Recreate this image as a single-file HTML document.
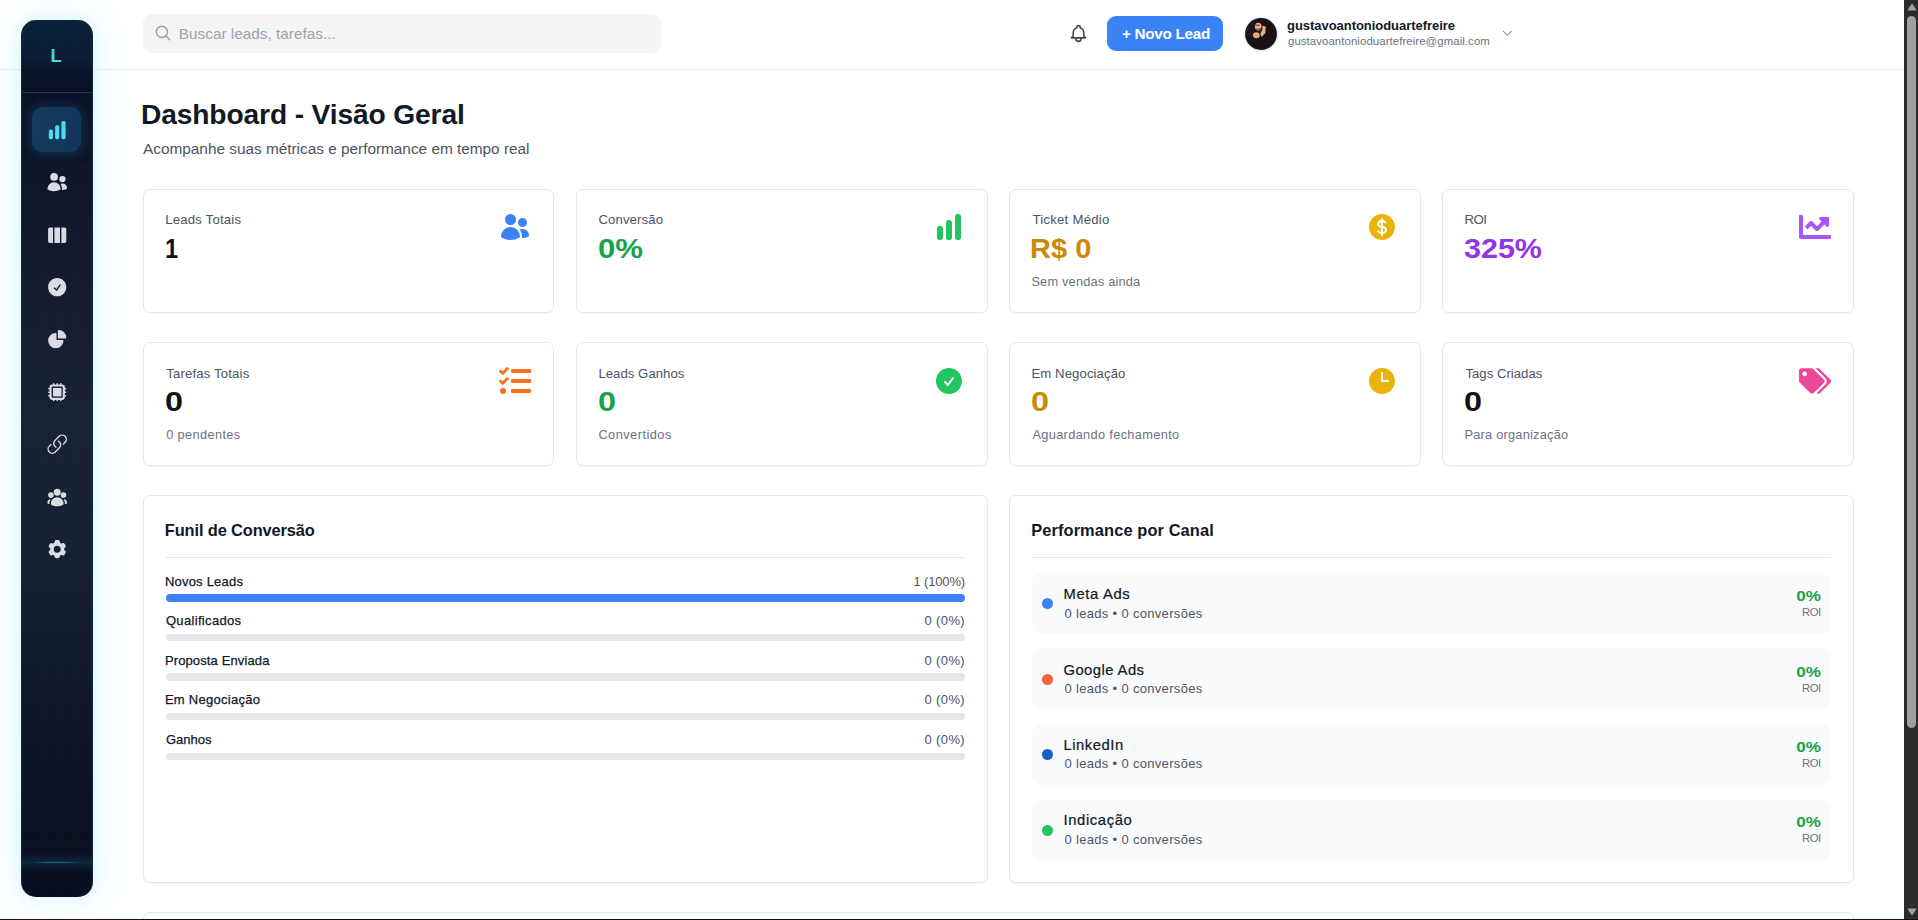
<!DOCTYPE html>
<html lang="pt-BR">
<head>
<meta charset="utf-8">
<title>Dashboard - Visão Geral</title>
<style>
*{box-sizing:border-box;margin:0;padding:0}
html,body{width:1918px;height:920px;overflow:hidden;background:#fff}
body{position:relative;font-family:"Liberation Sans",Arial,sans-serif;color:#111827}
.t{position:absolute;white-space:nowrap;line-height:1}
.a{position:absolute}
#header{position:absolute;left:0;top:0;width:1904px;height:70px;background:#fff;border-bottom:1px solid #eeeef0}
#search{position:absolute;left:143px;top:14px;width:518px;height:39px;border-radius:9px;background:#f4f4f6}
#btn{position:absolute;left:1107px;top:16px;width:116px;height:35px;border-radius:9px;background:#3b82f6}
#avatar{position:absolute;left:1245px;top:17px;width:33px;height:33px;border-radius:50%;background:#1a1012;box-shadow:0 0 0 1.5px #dbeafe;overflow:hidden}
#glow{position:absolute;left:21px;top:20px;width:72px;height:877px;border-radius:16px;box-shadow:0 0 40px 10px rgba(125,225,250,.13),0 0 14px 2px rgba(125,225,250,.16)}
#sidebar{position:absolute;left:21px;top:20px;width:72px;height:877px;border-radius:15px;overflow:hidden;border-left:1px solid #0c2942;border-right:1px solid #0c2440;background:linear-gradient(180deg,#0a2239 0,#0a1d34 38px,#0a142a 52px,#0a0f25 72px,#0b1227 74px,#0c1429 100px,#10172c 180px,#151c31 280px,#1a2236 400px,#161f33 540px,#0f1629 700px,#080d1f 877px)}
#sidebar .grid{position:absolute;inset:0;background-image:linear-gradient(rgba(90,150,210,.022) 1px,transparent 1px),linear-gradient(90deg,rgba(90,150,210,.022) 1px,transparent 1px);background-size:18.3px 18.3px}
#sidebar .div{position:absolute;left:-1px;top:72px;width:72px;height:1px;background:#103a52}
#sidebar .active{position:absolute;left:10px;top:86.7px;width:49px;height:45px;border-radius:11px;background:linear-gradient(90deg,#113d58,#14355d);box-shadow:0 0 9px 3px rgba(18,64,96,.5)}
#sidebar .bl{position:absolute;left:11px;top:841.5px;width:48px;height:1.6px;border-radius:2px;background:linear-gradient(90deg,rgba(28,111,149,0),#186288 30%,#186288 70%,rgba(28,111,149,0))}
#sidebar .band{position:absolute;left:0;top:833px;width:72px;height:19px;background:linear-gradient(180deg,rgba(16,70,105,0),rgba(16,70,105,.42) 50%,rgba(16,70,105,0))}
.si{position:absolute;left:45.8px;width:22.4px;height:22.4px;fill:#d9dce3}
.card{position:absolute;background:#fff;border:1px solid #e5e7eb;border-radius:7px;box-shadow:0 1px 2px rgba(0,0,0,.04)}
.hr{position:absolute;height:1px;background:#e5e7eb}
.bar{position:absolute;left:166px;width:799px;border-radius:4px;background:#e5e7eb}
.row{position:absolute;left:1032px;width:799px;height:61px;background:#f9fafb;border-radius:9px}
.dot{position:absolute;left:1042px;width:11px;height:11px;border-radius:50%}
.ci{position:absolute;width:32px;height:32px}
#sb{position:absolute;left:1904px;top:0;width:14px;height:920px;background:#2b2b2b}
#sb .th{position:absolute;left:3px;top:16px;width:9px;height:712px;border-radius:5px;background:#9f9f9f}
#sb svg{position:absolute;left:2.5px;width:10px;height:8px;fill:#9f9f9f}
#bottom{position:absolute;left:0;top:919px;width:1918px;height:1px;background:#1c0c14}

</style>
</head>
<body>
<div id="header"></div>
<div id="glow"></div>
<div id="sidebar"><div class="grid"></div><div class="div"></div><div class="active"></div><div class="band"></div><div class="bl"></div></div>
<div class="t" style="left:50.4px;top:47px;font-size:18.4px;font-weight:700;color:#3fd9e8;letter-spacing:0">L</div>
<div id="search"></div>
<div id="btn"></div>
<svg class="a" viewBox="0 0 36 36" style="left:1243px;top:15.6px;width:36px;height:36px"><circle cx="18" cy="18" r="17.5" fill="#e1efff"/><circle cx="18" cy="18" r="15.9" fill="#1b1114"/><path d="M2.6 18a15.400 15.400 0 0 1 10-14.500L9 22Z" fill="#241820"/><ellipse cx="15.200" cy="10.600" rx="3.300" ry="3.900" fill="#e6b08a"/><path d="M12.200 8.500h4.500v1.400h-4.500z" fill="#a8431d"/><path d="M13 12.600h3v1.300h-3z" fill="#b5482a"/><path d="M19.500 9.500l3.300 1.200-.5 6.500-3.800 3.800-1.200-3.500 2-3.500Z" fill="#e3ad86"/><ellipse cx="13.300" cy="19.200" rx="3.400" ry="3" fill="#dfa681"/><path d="M16.300 12.500l3 0-1 3-2.300.5Z" fill="#3a2a2c"/></svg>
<div class="card" style="left:143px;top:189px;width:411px;height:124px"></div>
<div class="card" style="left:576px;top:189px;width:411.5px;height:124px"></div>
<div class="card" style="left:1009px;top:189px;width:412px;height:124px"></div>
<div class="card" style="left:1442px;top:189px;width:412px;height:124px"></div>
<div class="card" style="left:143px;top:342px;width:411px;height:124px"></div>
<div class="card" style="left:576px;top:342px;width:411.5px;height:124px"></div>
<div class="card" style="left:1009px;top:342px;width:412px;height:124px"></div>
<div class="card" style="left:1442px;top:342px;width:412px;height:124px"></div>
<div class="card" style="left:143px;top:495px;width:844.5px;height:388px"></div>
<div class="card" style="left:1009px;top:495px;width:845px;height:388px"></div>
<div class="card" style="left:143px;top:912px;width:1711px;height:60px"></div>
<div class="hr" style="left:166px;top:557px;width:799px"></div>
<div class="hr" style="left:1032px;top:557px;width:799px"></div>
<div class="bar" style="top:594px;height:8px;background:#3b82f6"></div>
<div class="bar" style="top:634px;height:7px"></div>
<div class="bar" style="top:673.4px;height:7.2px"></div>
<div class="bar" style="top:713px;height:7px"></div>
<div class="bar" style="top:753px;height:7px"></div>
<div class="row" style="top:573px"></div>
<div class="row" style="top:648px"></div>
<div class="row" style="top:724px"></div>
<div class="row" style="top:800px"></div>
<div class="dot" style="top:598px;background:#3b82f6"></div>
<div class="dot" style="top:674px;background:#f0653a"></div>
<div class="dot" style="top:749px;background:#1a5fc4"></div>
<div class="dot" style="top:825px;background:#22c55e"></div>
<div id="sb"><svg viewBox="0 0 10 8" style="top:2.5px"><path d="M5 1 9 7H1Z" stroke="#9f9f9f" stroke-width="1" stroke-linejoin="round"/></svg><div class="th"></div><svg viewBox="0 0 10 8" style="top:907.7px"><path d="M5 7 9 1H1Z" stroke="#9f9f9f" stroke-width="1" stroke-linejoin="round"/></svg></div>
<div id="bottom"></div>

<svg class="si" viewBox="0 0 24 24" style="top:118.7px;fill:#4fd9f2"><path d="M18.375 2.25c-1.035 0-1.875.84-1.875 1.875v15.75c0 1.035.84 1.875 1.875 1.875h.75c1.035 0 1.875-.84 1.875-1.875V4.125c0-1.036-.84-1.875-1.875-1.875h-.75ZM9.750 8.625c0-1.036.84-1.875 1.875-1.875h.75c1.036 0 1.875.84 1.875 1.875v11.250c0 1.035-.84 1.875-1.875 1.875h-.75a1.875 1.875 0 0 1-1.875-1.875V8.625ZM3 13.125c0-1.036.84-1.875 1.875-1.875h.75c1.036 0 1.875.84 1.875 1.875v6.750c0 1.035-.84 1.875-1.875 1.875h-.75A1.875 1.875 0 0 1 3 19.875v-6.750Z"/></svg>
<svg class="si" viewBox="0 0 24 24" style="top:171.1px"><path d="M4.500 6.375a4.125 4.125 0 1 1 8.250 0 4.125 4.125 0 0 1-8.250 0ZM14.250 8.625a3.375 3.375 0 1 1 6.750 0 3.375 3.375 0 0 1-6.750 0ZM1.500 19.125a7.125 7.125 0 0 1 14.250 0v.003l-.001.119a.75.75 0 0 1-.363.630 13.067 13.067 0 0 1-6.761 1.873c-2.472 0-4.786-.684-6.760-1.873a.75.75 0 0 1-.364-.630l-.001-.122ZM17.250 19.128l-.001.144a2.250 2.250 0 0 1-.233.960 10.088 10.088 0 0 0 5.060-1.010.75.75 0 0 0 .420-.643 4.875 4.875 0 0 0-6.957-4.611 8.586 8.586 0 0 1 1.710 5.157v.003Z"/></svg>
<svg class="si" viewBox="0 0 24 24" style="top:223.5px"><path d="M15 3.750H9v16.500h6V3.750ZM16.500 20.250h3.375c1.035 0 1.875-.84 1.875-1.875V5.625c0-1.036-.84-1.875-1.875-1.875H16.500v16.500ZM4.125 3.750H7.500v16.500H4.125a1.875 1.875 0 0 1-1.875-1.875V5.625c0-1.036.84-1.875 1.875-1.875Z"/></svg>
<svg class="si" viewBox="0 0 24 24" style="top:275.9px"><path fill-rule="evenodd" d="M2.250 12c0-5.385 4.365-9.750 9.750-9.750s9.750 4.365 9.750 9.750-4.365 9.750-9.750 9.750S2.250 17.385 2.250 12Zm13.360-1.814a.75.75 0 1 0-1.220-.872l-3.236 4.530L9.530 12.220a.75.75 0 0 0-1.060 1.060l2.250 2.250a.75.75 0 0 0 1.140-.094l3.750-5.250Z"/></svg>
<svg class="si" viewBox="0 0 24 24" style="top:328.3px"><path d="M2.250 13.500a8.250 8.250 0 0 1 8.250-8.250.75.75 0 0 1 .75.75v6.750H18a.75.75 0 0 1 .75.750 8.250 8.250 0 0 1-16.500 0Z"/><path d="M12.750 3a.75.75 0 0 1 .75-.75 8.250 8.250 0 0 1 8.250 8.250.75.75 0 0 1-.75.750h-7.500a.75.75 0 0 1-.75-.75V3Z"/></svg>
<svg class="si" viewBox="0 0 24 24" style="top:380.7px"><path d="M16.500 7.500h-9v9h9v-9Z"/><path fill-rule="evenodd" d="M8.250 2.250A.75.75 0 0 1 9 3v.75h2.250V3a.75.75 0 0 1 1.500 0v.75H15V3a.75.75 0 0 1 1.500 0v.75h.75a3 3 0 0 1 3 3v.75H21A.75.75 0 0 1 21 9h-.75v2.250H21a.75.75 0 0 1 0 1.500h-.75V15H21a.75.75 0 0 1 0 1.500h-.75v.75a3 3 0 0 1-3 3h-.75V21a.75.75 0 0 1-1.500 0v-.75h-2.250V21a.75.75 0 0 1-1.500 0v-.75H9V21a.75.75 0 0 1-1.500 0v-.75h-.75a3 3 0 0 1-3-3v-.75H3A.75.75 0 0 1 3 15h.75v-2.250H3a.75.75 0 0 1 0-1.500h.75V9H3a.75.75 0 0 1 0-1.500h.75v-.75a3 3 0 0 1 3-3h.75V3a.75.75 0 0 1 .75-.75ZM6 6.750A.75.75 0 0 1 6.750 6h10.500a.75.75 0 0 1 .75.750v10.500a.75.75 0 0 1-.75.750H6.750a.75.75 0 0 1-.75-.75V6.750Z"/></svg>
<svg class="si" viewBox="0 0 24 24" style="top:433.1px"><path fill="none" stroke="#d9dce3" stroke-width="1.5" stroke-linecap="round" stroke-linejoin="round" d="M13.190 8.688a4.500 4.500 0 0 1 1.242 7.244l-4.500 4.500a4.500 4.500 0 0 1-6.364-6.364l1.757-1.757m13.350-.622 1.757-1.757a4.500 4.500 0 0 0-6.364-6.364l-4.500 4.500a4.500 4.500 0 0 0 1.242 7.244"/></svg>
<svg class="si" viewBox="0 0 24 24" style="top:485.5px"><path fill-rule="evenodd" d="M8.250 6.750a3.750 3.750 0 1 1 7.500 0 3.750 3.750 0 0 1-7.500 0ZM15.750 9.750a3 3 0 1 1 6 0 3 3 0 0 1-6 0ZM2.250 9.750a3 3 0 1 1 6 0 3 3 0 0 1-6 0ZM6.310 15.117A6.745 6.745 0 0 1 12 12a6.745 6.745 0 0 1 6.709 7.498.75.75 0 0 1-.372.568A12.696 12.696 0 0 1 12 21.750c-2.305 0-4.470-.612-6.337-1.684a.75.75 0 0 1-.372-.568 6.787 6.787 0 0 1 1.019-4.380Z"/><path d="M5.082 14.254a8.287 8.287 0 0 0-1.308 5.135 9.687 9.687 0 0 1-1.764-.44l-.115-.04a.563.563 0 0 1-.373-.487l-.01-.121a3.750 3.750 0 0 1 3.570-4.047ZM20.226 19.389a8.287 8.287 0 0 0-1.308-5.135 3.750 3.750 0 0 1 3.570 4.047l-.01.121a.563.563 0 0 1-.373.486l-.115.04c-.567.200-1.156.349-1.764.441Z"/></svg>
<svg class="si" viewBox="0 0 24 24" style="top:537.9px"><path fill-rule="evenodd" d="M11.078 2.250c-.917 0-1.699.663-1.850 1.567L9.050 4.889c-.02.120-.115.260-.297.348a7.493 7.493 0 0 0-.986.570c-.166.115-.334.126-.450.083L6.300 5.508a1.875 1.875 0 0 0-2.282.819l-.922 1.597a1.875 1.875 0 0 0 .432 2.385l.840.692c.095.078.170.229.154.430a7.598 7.598 0 0 0 0 1.139c.015.200-.059.352-.153.430l-.841.692a1.875 1.875 0 0 0-.432 2.385l.922 1.597a1.875 1.875 0 0 0 2.282.818l1.019-.382c.115-.043.283-.031.450.082.312.214.641.405.985.570.182.088.277.228.297.350l.178 1.071c.151.904.933 1.567 1.850 1.567h1.844c.916 0 1.699-.663 1.850-1.567l.178-1.072c.02-.120.114-.260.297-.349.344-.165.673-.356.985-.570.167-.114.335-.125.450-.082l1.020.382a1.875 1.875 0 0 0 2.280-.819l.923-1.597a1.875 1.875 0 0 0-.432-2.385l-.840-.692c-.095-.078-.170-.229-.154-.430a7.614 7.614 0 0 0 0-1.139c-.016-.200.059-.352.153-.430l.840-.692c.708-.582.891-1.590.433-2.385l-.922-1.597a1.875 1.875 0 0 0-2.282-.818l-1.020.382c-.114.043-.282.031-.449-.083a7.490 7.490 0 0 0-.985-.570c-.183-.087-.277-.227-.297-.348l-.179-1.072a1.875 1.875 0 0 0-1.850-1.567h-1.843ZM12 15.750a3.750 3.750 0 1 0 0-7.500 3.750 3.750 0 0 0 0 7.500Z"/></svg>
<svg class="ci" viewBox="0 0 24 24" style="left:499px;top:211px;fill:#3b82f6"><path d="M4.500 6.375a4.125 4.125 0 1 1 8.250 0 4.125 4.125 0 0 1-8.250 0ZM14.250 8.625a3.375 3.375 0 1 1 6.750 0 3.375 3.375 0 0 1-6.750 0ZM1.500 19.125a7.125 7.125 0 0 1 14.250 0v.003l-.001.119a.75.75 0 0 1-.363.630 13.067 13.067 0 0 1-6.761 1.873c-2.472 0-4.786-.684-6.760-1.873a.75.75 0 0 1-.364-.630l-.001-.122ZM17.250 19.128l-.001.144a2.250 2.250 0 0 1-.233.960 10.088 10.088 0 0 0 5.060-1.010.75.75 0 0 0 .420-.643 4.875 4.875 0 0 0-6.957-4.611 8.586 8.586 0 0 1 1.710 5.157v.003Z"/></svg>
<svg class="ci" viewBox="0 0 24 24" style="left:933.3px;top:211px;fill:#22c55e"><path d="M18.375 2.25c-1.035 0-1.875.84-1.875 1.875v15.75c0 1.035.84 1.875 1.875 1.875h.75c1.035 0 1.875-.84 1.875-1.875V4.125c0-1.036-.84-1.875-1.875-1.875h-.75ZM9.750 8.625c0-1.036.84-1.875 1.875-1.875h.75c1.036 0 1.875.84 1.875 1.875v11.250c0 1.035-.84 1.875-1.875 1.875h-.75a1.875 1.875 0 0 1-1.875-1.875V8.625ZM3 13.125c0-1.036.84-1.875 1.875-1.875h.75c1.036 0 1.875.84 1.875 1.875v6.750c0 1.035-.84 1.875-1.875 1.875h-.75A1.875 1.875 0 0 1 3 19.875v-6.750Z"/></svg>
<svg class="ci" viewBox="0 0 24 24" style="left:1366px;top:211px;fill:#eab308"><path d="M10.464 8.746c.227-.18.497-.311.786-.394v2.795a2.252 2.252 0 0 1-.786-.393c-.394-.313-.546-.681-.546-1.004 0-.323.152-.691.546-1.004ZM12.750 15.662v-2.824c.347.085.664.228.921.421.427.320.579.686.579.991 0 .305-.152.671-.579.991a2.534 2.534 0 0 1-.921.420Z"/><path fill-rule="evenodd" d="M12 2.250c-5.385 0-9.750 4.365-9.750 9.750s4.365 9.750 9.750 9.750 9.750-4.365 9.750-9.750S17.385 2.250 12 2.250ZM12.750 6a.75.75 0 0 0-1.500 0v.816a3.836 3.836 0 0 0-1.720.756c-.712.566-1.112 1.350-1.112 2.178 0 .829.400 1.612 1.113 2.178.502.400 1.102.647 1.719.756v2.978a2.536 2.536 0 0 1-.921-.421l-.879-.660a.75.75 0 0 0-.900 1.200l.879.660c.533.400 1.169.645 1.821.750V18a.75.75 0 0 0 1.500 0v-.810a4.124 4.124 0 0 0 1.821-.749c.745-.559 1.179-1.344 1.179-2.191 0-.847-.434-1.632-1.179-2.191a4.122 4.122 0 0 0-1.821-.750V8.354c.290.082.559.213.786.393l.415.330a.75.75 0 0 0 .933-1.175l-.415-.330a3.836 3.836 0 0 0-1.719-.755V6Z"/></svg>
<svg class="ci" viewBox="0 0 512 512" style="left:1799px;top:211px;fill:#a855f7"><path d="M496 384H64V80c0-8.840-7.160-16-16-16H16C7.160 64 0 71.160 0 80v336c0 17.670 14.330 32 32 32h464c8.840 0 16-7.160 16-16v-32c0-8.840-7.160-16-16-16zM464 96H345.940c-21.380 0-32.090 25.850-16.970 40.970l32.400 32.400L288 242.750l-73.370-73.370c-12.500-12.500-32.760-12.500-45.250 0l-68.690 68.690c-6.250 6.250-6.250 16.380 0 22.630l22.620 22.620c6.250 6.250 16.380 6.250 22.630 0L192 237.250l73.370 73.370c12.500 12.500 32.760 12.500 45.250 0l96-96 32.400 32.400c15.120 15.120 40.970 4.410 40.970-16.970V112c.01-8.840-7.150-16-15.990-16z"/></svg>
<svg class="ci" viewBox="0 0 512 512" style="left:499px;top:365px;fill:#f97316"><rect x="192" y="64" width="320" height="64" rx="16"/><rect x="192" y="224" width="320" height="64" rx="16"/><rect x="192" y="384" width="320" height="64" rx="16"/><circle cx="64" cy="416" r="48"/><path d="M139.6 35.500a12 12 0 0 0-17 0L58.600 98.800l-22.700-22.100a12 12 0 0 0-17 0L3.500 92.100a12 12 0 0 0 0 17l47.600 47.400a12.800 12.800 0 0 0 17.600 0l15.600-15.600L156.500 69a12.100 12.100 0 0 0 .100-17z"/><path d="M139.6 195.500a12 12 0 0 0-17 0L58.600 258.800l-22.700-22.100a12 12 0 0 0-17 0L3.500 252.100a12 12 0 0 0 0 17l47.600 47.400a12.800 12.800 0 0 0 17.600 0l15.600-15.600L156.500 229a12.100 12.100 0 0 0 .100-17z"/></svg>
<svg class="ci" viewBox="0 0 24 24" style="left:933.3px;top:365px;fill:#22c55e"><path fill-rule="evenodd" d="M2.250 12c0-5.385 4.365-9.750 9.750-9.750s9.750 4.365 9.750 9.750-4.365 9.750-9.750 9.750S2.250 17.385 2.250 12Zm13.360-1.814a.75.75 0 1 0-1.220-.872l-3.236 4.530L9.530 12.220a.75.75 0 0 0-1.060 1.060l2.250 2.250a.75.75 0 0 0 1.140-.094l3.750-5.250Z"/></svg>
<svg class="ci" viewBox="0 0 24 24" style="left:1366px;top:365px;fill:#eab308"><path fill-rule="evenodd" d="M12 2.250c-5.385 0-9.750 4.365-9.750 9.750s4.365 9.750 9.750 9.750 9.750-4.365 9.750-9.750S17.385 2.250 12 2.250ZM12.750 6a.75.75 0 0 0-1.500 0v6c0 .414.336.75.750.750h4.500a.75.75 0 0 0 0-1.500h-3.750V6Z"/></svg>
<svg class="ci" viewBox="0 0 640 512" style="left:1799px;top:365px;fill:#ec4899"><path d="M497.941 225.941L286.059 14.059A48 48 0 0 0 252.118 0H48C21.490 0 0 21.490 0 48v204.118a48 48 0 0 0 14.059 33.941l211.882 211.882c18.744 18.745 49.136 18.746 67.882 0l204.118-204.118c18.745-18.745 18.745-49.137 0-67.882zM112 160c-26.510 0-48-21.490-48-48s21.490-48 48-48 48 21.490 48 48-21.490 48-48 48zm513.941 133.823L421.823 497.941c-18.745 18.745-49.137 18.745-67.882 0l-.36-.36L527.640 323.522c16.999-16.999 26.360-39.600 26.360-63.640s-9.362-46.641-26.360-63.640L331.397 0h48.721a48 48 0 0 1 33.941 14.059l211.882 211.882c18.745 18.745 18.745 49.137 0 67.882z"/></svg>
<svg class="a" viewBox="0 0 24 24" style="left:153.8px;top:23.6px;width:18px;height:18px;fill:none;stroke:#969cab;stroke-width:1.9;stroke-linecap:round"><path d="m21 21-5.197-5.197m0 0A7.500 7.500 0 1 0 5.196 5.196a7.500 7.500 0 0 0 10.607 10.607Z"/></svg>
<svg class="a" viewBox="0 0 24 24" style="left:1068.3px;top:23.3px;width:21px;height:21px;fill:none;stroke:#414857;stroke-width:1.85;stroke-linecap:round;stroke-linejoin:round"><path d="M15 17h5l-1.405-1.405A2.032 2.032 0 0 1 18 14.158V11a6.002 6.002 0 0 0-4-5.659V5a2 2 0 1 0-4 0v.341C7.670 6.165 6 8.388 6 11v3.159c0 .538-.214 1.055-.595 1.436L4 17h5m6 0v1a3 3 0 1 1-6 0v-1m6 0H9"/></svg>
<svg class="a" viewBox="0 0 24 24" style="left:1500.9px;top:27px;width:12.8px;height:12.8px;fill:none;stroke:#9096a5;stroke-width:1.9;stroke-linecap:round;stroke-linejoin:round"><path d="m19.500 8.250-7.500 7.500-7.500-7.500"/></svg>
<div class="t" style="left:178.8px;top:26.0px;font-size:15.3px;color:#9ca3af;letter-spacing:0.02px;">Buscar leads, tarefas...</div>
<div class="t" style="left:1121.9px;top:26.0px;font-size:15.3px;font-weight:700;color:#ffffff;letter-spacing:-0.30px;">+ Novo Lead</div>
<div class="t" style="left:1287.0px;top:19.0px;font-size:13px;font-weight:700;color:#111827;letter-spacing:-0.04px;">gustavoantonioduartefreire</div>
<div class="t" style="left:1288.0px;top:35.7px;font-size:11.4px;color:#6b7280;letter-spacing:0.08px;">gustavoantonioduartefreire@gmail.com</div>
<div class="t" style="left:141.0px;top:100.4px;font-size:28.2px;font-weight:700;color:#111827;letter-spacing:-0.14px;">Dashboard - Visão Geral</div>
<div class="t" style="left:143.0px;top:140.8px;font-size:15.4px;color:#4b5563;letter-spacing:-0.02px;">Acompanhe suas métricas e performance em tempo real</div>
<div class="t" style="left:165.2px;top:212.8px;font-size:13.2px;color:#4b5563;letter-spacing:0.18px;">Leads Totais</div>
<div class="t" style="left:165.4px;top:234.6px;font-size:28px;transform:scaleX(0.846);transform-origin:0 0;font-weight:700;color:#111111;">1</div>
<div class="t" style="left:598.4px;top:212.8px;font-size:13.2px;color:#4b5563;letter-spacing:0.11px;">Conversão</div>
<div class="t" style="left:598.3px;top:234.6px;font-size:28px;transform:scaleX(1.113);transform-origin:0 0;font-weight:700;color:#16a34a;">0%</div>
<div class="t" style="left:1032.4px;top:212.8px;font-size:13.2px;color:#4b5563;letter-spacing:0.24px;">Ticket Médio</div>
<div class="t" style="left:1030.3px;top:234.6px;font-size:28px;transform:scaleX(1.036);transform-origin:0 0;font-weight:700;color:#ca8a04;">R$ 0</div>
<div class="t" style="left:1031.4px;top:275.6px;font-size:12.8px;color:#6b7280;letter-spacing:0.19px;">Sem vendas ainda</div>
<div class="t" style="left:1464.4px;top:212.8px;font-size:13.2px;color:#4b5563;letter-spacing:-0.40px;">ROI</div>
<div class="t" style="left:1464.3px;top:234.6px;font-size:28px;transform:scaleX(1.089);transform-origin:0 0;font-weight:700;color:#9333ea;">325%</div>
<div class="t" style="left:166.2px;top:366.8px;font-size:13.2px;color:#4b5563;letter-spacing:0.15px;">Tarefas Totais</div>
<div class="t" style="left:165.0px;top:388.2px;font-size:28px;transform:scaleX(1.157);transform-origin:0 0;font-weight:700;color:#111111;">0</div>
<div class="t" style="left:166.2px;top:428.7px;font-size:12.8px;color:#6b7280;letter-spacing:0.36px;">0 pendentes</div>
<div class="t" style="left:598.4px;top:366.8px;font-size:13.2px;color:#4b5563;letter-spacing:0.02px;">Leads Ganhos</div>
<div class="t" style="left:598.2px;top:388.2px;font-size:28px;transform:scaleX(1.157);transform-origin:0 0;font-weight:700;color:#16a34a;">0</div>
<div class="t" style="left:598.4px;top:428.7px;font-size:12.8px;color:#6b7280;letter-spacing:0.46px;">Convertidos</div>
<div class="t" style="left:1031.4px;top:366.8px;font-size:13.2px;color:#4b5563;letter-spacing:0.08px;">Em Negociação</div>
<div class="t" style="left:1031.2px;top:388.2px;font-size:28px;transform:scaleX(1.157);transform-origin:0 0;font-weight:700;color:#ca8a04;">0</div>
<div class="t" style="left:1032.4px;top:428.7px;font-size:12.8px;color:#6b7280;letter-spacing:0.33px;">Aguardando fechamento</div>
<div class="t" style="left:1465.4px;top:366.8px;font-size:13.2px;color:#4b5563;">Tags Criadas</div>
<div class="t" style="left:1464.2px;top:388.2px;font-size:28px;transform:scaleX(1.157);transform-origin:0 0;font-weight:700;color:#111111;">0</div>
<div class="t" style="left:1464.4px;top:428.7px;font-size:12.8px;color:#6b7280;letter-spacing:0.23px;">Para organização</div>
<div class="t" style="left:164.8px;top:522.1px;font-size:16.4px;font-weight:700;color:#111827;letter-spacing:-0.12px;">Funil de Conversão</div>
<div class="t" style="left:1031.2px;top:522.1px;font-size:16.4px;font-weight:700;color:#111827;letter-spacing:0.11px;">Performance por Canal</div>
<div class="t" style="left:164.9px;top:575.0px;font-size:13px;color:#111827;letter-spacing:0.22px;-webkit-text-stroke:.25px #111827;">Novos Leads</div>
<div class="t" style="left:913.4px;top:575.0px;font-size:13px;color:#4b5563;letter-spacing:-0.14px;">1 (100%)</div>
<div class="t" style="left:165.9px;top:614.4px;font-size:13px;color:#111827;letter-spacing:0.33px;-webkit-text-stroke:.25px #111827;">Qualificados</div>
<div class="t" style="left:924.4px;top:614.4px;font-size:13px;color:#4b5563;letter-spacing:0.40px;">0 (0%)</div>
<div class="t" style="left:164.9px;top:653.8px;font-size:13px;color:#111827;letter-spacing:0.13px;-webkit-text-stroke:.25px #111827;">Proposta Enviada</div>
<div class="t" style="left:924.4px;top:653.8px;font-size:13px;color:#4b5563;letter-spacing:0.40px;">0 (0%)</div>
<div class="t" style="left:164.9px;top:693.2px;font-size:13px;color:#111827;letter-spacing:0.28px;-webkit-text-stroke:.25px #111827;">Em Negociação</div>
<div class="t" style="left:924.4px;top:693.2px;font-size:13px;color:#4b5563;letter-spacing:0.40px;">0 (0%)</div>
<div class="t" style="left:165.9px;top:732.6px;font-size:13px;color:#111827;letter-spacing:0.04px;-webkit-text-stroke:.25px #111827;">Ganhos</div>
<div class="t" style="left:924.4px;top:732.6px;font-size:13px;color:#4b5563;letter-spacing:0.40px;">0 (0%)</div>
<div class="t" style="left:1063.5px;top:587.4px;font-size:14.8px;color:#111827;letter-spacing:0.64px;-webkit-text-stroke:.22px #111827;">Meta Ads</div>
<div class="t" style="left:1064.5px;top:606.6px;font-size:13px;color:#4b5563;letter-spacing:0.32px;">0 leads • 0 conversões</div>
<div class="t" style="left:1798.5px;top:588.2px;font-size:15px;transform:scaleX(1.135);transform-origin:21px 0;font-weight:700;color:#16a34a;">0%</div>
<div class="t" style="left:1802.1px;top:607.4px;font-size:11.3px;color:#6b7280;letter-spacing:-0.55px;">ROI</div>
<div class="t" style="left:1063.5px;top:662.7px;font-size:14.8px;color:#111827;letter-spacing:0.44px;-webkit-text-stroke:.22px #111827;">Google Ads</div>
<div class="t" style="left:1064.5px;top:681.9px;font-size:13px;color:#4b5563;letter-spacing:0.32px;">0 leads • 0 conversões</div>
<div class="t" style="left:1798.5px;top:663.5px;font-size:15px;transform:scaleX(1.135);transform-origin:21px 0;font-weight:700;color:#16a34a;">0%</div>
<div class="t" style="left:1802.1px;top:682.7px;font-size:11.3px;color:#6b7280;letter-spacing:-0.55px;">ROI</div>
<div class="t" style="left:1063.5px;top:738.0px;font-size:14.8px;color:#111827;letter-spacing:0.53px;-webkit-text-stroke:.22px #111827;">LinkedIn</div>
<div class="t" style="left:1064.5px;top:757.2px;font-size:13px;color:#4b5563;letter-spacing:0.32px;">0 leads • 0 conversões</div>
<div class="t" style="left:1798.5px;top:738.8px;font-size:15px;transform:scaleX(1.135);transform-origin:21px 0;font-weight:700;color:#16a34a;">0%</div>
<div class="t" style="left:1802.1px;top:758.0px;font-size:11.3px;color:#6b7280;letter-spacing:-0.55px;">ROI</div>
<div class="t" style="left:1063.5px;top:813.3px;font-size:14.8px;color:#111827;letter-spacing:0.62px;-webkit-text-stroke:.22px #111827;">Indicação</div>
<div class="t" style="left:1064.5px;top:832.5px;font-size:13px;color:#4b5563;letter-spacing:0.32px;">0 leads • 0 conversões</div>
<div class="t" style="left:1798.5px;top:814.1px;font-size:15px;transform:scaleX(1.135);transform-origin:21px 0;font-weight:700;color:#16a34a;">0%</div>
<div class="t" style="left:1802.1px;top:833.3px;font-size:11.3px;color:#6b7280;letter-spacing:-0.55px;">ROI</div>
</body>
</html>
